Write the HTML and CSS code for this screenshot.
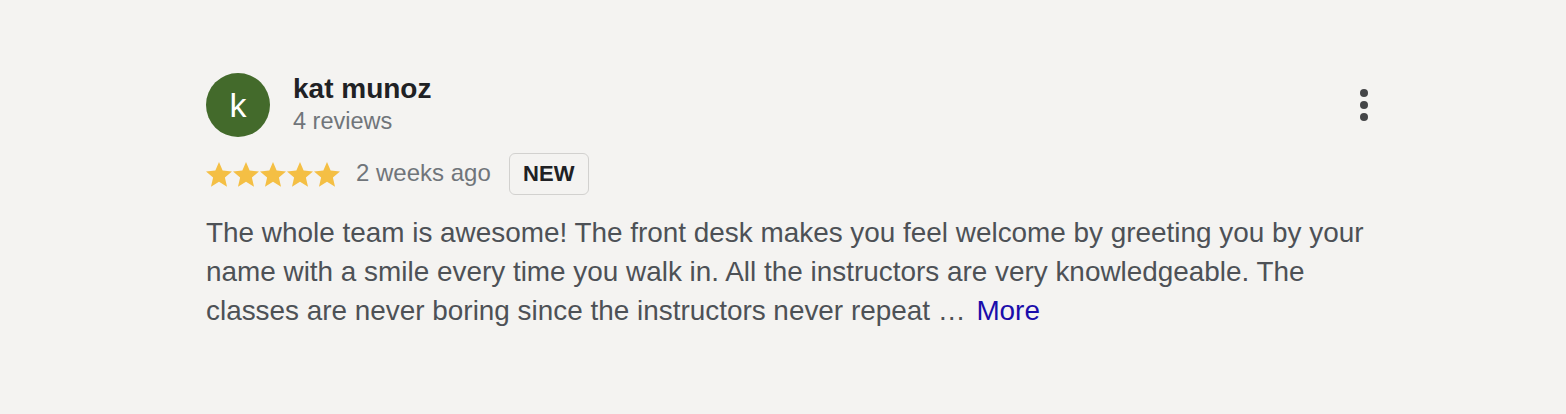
FILE: index.html
```html
<!DOCTYPE html>
<html lang="en">
<head>
<meta charset="utf-8">
<title>Review</title>
<link rel="stylesheet" href="styles.css">
</head>
<body>
<div class="page">
  <div class="review">
    <div class="header">
      <div class="avatar">k</div>
      <div class="author">
        <div class="name">kat munoz</div>
        <div class="count">4 reviews</div>
      </div>
      <button class="kebab" aria-label="More options">
        <span class="dot"></span><span class="dot"></span><span class="dot"></span>
      </button>
    </div>
    <div class="meta">
      <div class="stars">
        <svg class="star" viewBox="2 2 20 19.27"><path d="M12 17.27L18.18 21l-1.64-7.03L22 9.24l-7.19-.61L12 2 9.19 8.63 2 9.24l5.46 4.73L5.82 21z"/></svg>
        <svg class="star" viewBox="2 2 20 19.27"><path d="M12 17.27L18.18 21l-1.64-7.03L22 9.24l-7.19-.61L12 2 9.19 8.63 2 9.24l5.46 4.73L5.82 21z"/></svg>
        <svg class="star" viewBox="2 2 20 19.27"><path d="M12 17.27L18.18 21l-1.64-7.03L22 9.24l-7.19-.61L12 2 9.19 8.63 2 9.24l5.46 4.73L5.82 21z"/></svg>
        <svg class="star" viewBox="2 2 20 19.27"><path d="M12 17.27L18.18 21l-1.64-7.03L22 9.24l-7.19-.61L12 2 9.19 8.63 2 9.24l5.46 4.73L5.82 21z"/></svg>
        <svg class="star" viewBox="2 2 20 19.27"><path d="M12 17.27L18.18 21l-1.64-7.03L22 9.24l-7.19-.61L12 2 9.19 8.63 2 9.24l5.46 4.73L5.82 21z"/></svg>
      </div>
      <span class="date">2 weeks ago</span>
      <span class="badge">NEW</span>
    </div>
    <p class="text"><span>The whole team is awesome! The front desk makes you feel welcome by greeting you by your name with a smile every time you walk in. All the instructors are very knowledgeable. The classes are never boring since the instructors never repeat …</span> <a class="more" href="#">More</a></p>
  </div>
</div>
</body>
</html>
```

FILE: styles.css
```css
html, body {
  margin: 0;
  padding: 0;
  background: #f4f3f1;
}

body {
  font-family: "Liberation Sans", Arial, Helvetica, sans-serif;
  width: 1566px;
  height: 414px;
  overflow: hidden;
}

.page {
  padding: 73px 0 0 206px;
}

.review {
  width: 1170px;
}

.header {
  display: flex;
  align-items: flex-start;
}

.avatar {
  width: 64px;
  height: 64px;
  border-radius: 50%;
  background: #436a2b;
  color: #ffffff;
  font-size: 34px;
  line-height: 64px;
  text-align: center;
  flex: none;
}

.author {
  margin-left: 23px;
}

.name {
  font-size: 28px;
  font-weight: bold;
  line-height: 32px;
  color: #202124;
}

.count {
  font-size: 23.5px;
  line-height: 32px;
  color: #70757a;
}

.kebab {
  margin-left: auto;
  align-self: center;
  width: 24px;
  height: 36px;
  padding: 0;
  border: 0;
  background: none;
  display: flex;
  flex-direction: column;
  align-items: center;
  justify-content: center;
  gap: 3.5px;
  cursor: pointer;
}

.dot {
  width: 8.5px;
  height: 8.5px;
  border-radius: 50%;
  background: #444547;
}

.meta {
  display: flex;
  align-items: center;
  height: 42px;
  margin-top: 16px;
}

.stars {
  display: flex;
  gap: 1px;
}

.star {
  width: 26px;
  height: 25px;
  fill: #f4bf44;
}

.date {
  margin-left: 16px;
  font-size: 24px;
  line-height: 28px;
  color: #70757a;
  position: relative;
  top: -1px;
}

.badge {
  margin-left: 18px;
  box-sizing: border-box;
  width: 80px;
  height: 42px;
  border: 1px solid #d2d1cf;
  border-radius: 6px;
  font-size: 22px;
  font-weight: bold;
  line-height: 40px;
  text-align: center;
  color: #202124;
}

.text {
  margin: 18px 0 0;
  font-size: 27.9px;
  line-height: 39px;
  color: #4d5156;
}

.more {
  margin-left: 3px;
  color: #1a0dab;
  text-decoration: none;
}
```
